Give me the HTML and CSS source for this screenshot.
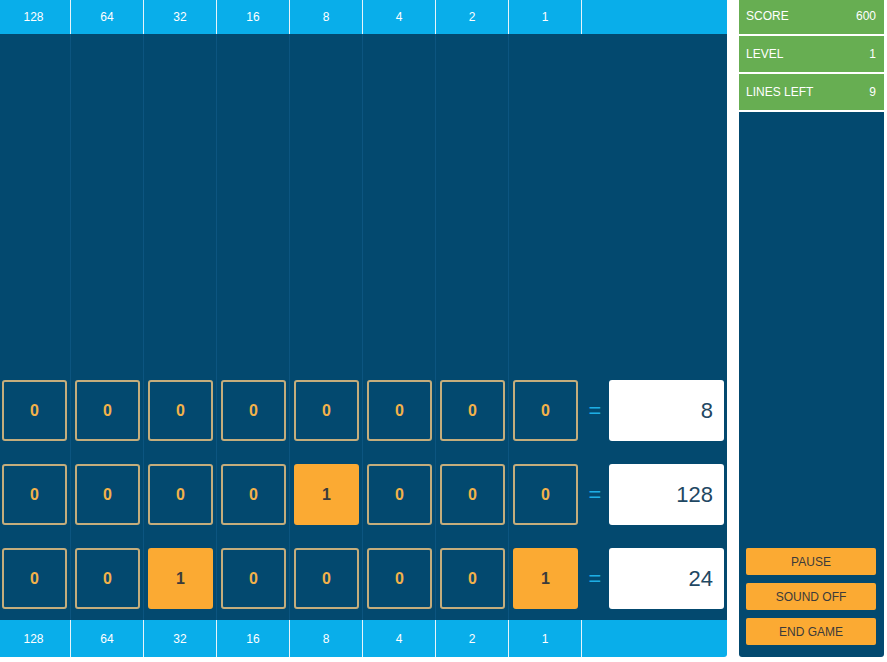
FILE: index.html
```html
<!DOCTYPE html>
<html lang="en">
<head>
<meta charset="UTF-8">
<meta name="viewport" content="width=device-width, initial-scale=1.0">
<title>Binary Game</title>
<link rel="stylesheet" href="styles.css">
</head>
<body>
    <div class="game">
        <div class="board">
            <div class="bits">
                <div class="bit">128</div><div class="bit">64</div><div class="bit">32</div><div class="bit">16</div>
                <div class="bit">8</div><div class="bit">4</div><div class="bit">2</div><div class="bit">1</div>
                <div class="bit"></div>
            </div>

            <div class="field">
                <div class="line">
                    <div class="cell">0</div><div class="cell">0</div><div class="cell">0</div><div class="cell">0</div>
                    <div class="cell">0</div><div class="cell">0</div><div class="cell">0</div><div class="cell">0</div>
                    <div class="answer"><span class="equals">=</span><div class="result">8</div></div>
                </div>
                <div class="line">
                    <div class="cell">0</div><div class="cell">0</div><div class="cell">0</div><div class="cell">0</div>
                    <div class="cell on">1</div><div class="cell">0</div><div class="cell">0</div><div class="cell">0</div>
                    <div class="answer"><span class="equals">=</span><div class="result">128</div></div>
                </div>
                <div class="line">
                    <div class="cell">0</div><div class="cell">0</div><div class="cell on">1</div><div class="cell">0</div>
                    <div class="cell">0</div><div class="cell">0</div><div class="cell">0</div><div class="cell on">1</div>
                    <div class="answer"><span class="equals">=</span><div class="result">24</div></div>
                </div>
            </div>

            <div class="bits bottom">
                <div class="bit">128</div><div class="bit">64</div><div class="bit">32</div><div class="bit">16</div>
                <div class="bit">8</div><div class="bit">4</div><div class="bit">2</div><div class="bit">1</div>
                <div class="bit"></div>
            </div>
        </div>

        <div class="sidebar">
            <div class="stat"><span>SCORE</span><span>600</span></div>
            <div class="stat"><span>LEVEL</span><span>1</span></div>
            <div class="stat"><span>LINES LEFT</span><span>9</span></div>
            <div class="controls">
                <button>PAUSE</button>
                <button>SOUND OFF</button>
                <button>END GAME</button>
            </div>
        </div>
    </div>
</body>
</html>
```

FILE: styles.css
```css
body {
    margin: 0;
    padding: 0;
    background-color: #fff;
    font-family: "Liberation Sans", Arial, sans-serif;
    overflow: hidden;
}
.game {
    display: flex;
    align-items: flex-start;
}
.board {
    width: 730px;
    margin-left: -3px;
    display: flex;
    flex-direction: column;
    border-bottom-right-radius: 3px;
    overflow: hidden;
}
.bits {
    display: grid;
    grid-template-columns: 74px repeat(7, 73px) 145px;
    height: 34px;
    background-color: #09aeea;
}
.bits.bottom {
    height: 37px;
}
.bit {
    color: #fff;
    font-size: 12px;
    display: flex;
    align-items: center;
    justify-content: center;
    border-right: 1px solid #e6f4fa;
}
.bit:last-child {
    border-right: none;
}
.field {
    height: 586px;
    box-sizing: border-box;
    padding-bottom: 11px;
    display: flex;
    flex-direction: column;
    justify-content: flex-end;
    gap: 23px;
    background-color: #03496f;
    background-image: repeating-linear-gradient(to right, #0c5580 0, #0c5580 1px, transparent 1px, transparent 73px);
    background-position: 73px 0;
    background-size: 511px 100%;
    background-repeat: no-repeat;
}
.line {
    display: grid;
    grid-template-columns: repeat(8, 73px) 146px;
    height: 61px;
}
.cell {
    width: 65px;
    margin-left: 5px;
    box-sizing: border-box;
    border: 2px solid #c4ad7c;
    border-radius: 3px;
    display: flex;
    align-items: center;
    justify-content: center;
    color: #f2b24a;
    font-weight: bold;
    font-size: 16px;
}
.cell.on {
    background-color: #fbaa33;
    border-color: #fbaa33;
    color: #3b3b3b;
}
.answer {
    display: flex;
    align-items: center;
}
.equals {
    width: 28px;
    text-align: center;
    color: #1eaee4;
    font-size: 22px;
}
.result {
    width: 115px;
    height: 61px;
    box-sizing: border-box;
    background-color: #fff;
    border-radius: 3px;
    padding-right: 11px;
    display: flex;
    align-items: center;
    justify-content: flex-end;
    color: #1f4863;
    font-size: 22px;
}
.sidebar {
    width: 145px;
    height: 659px;
    margin-top: -2px;
    margin-left: 12px;
    background-color: #03496f;
    border-bottom-left-radius: 3px;
    border-bottom-right-radius: 3px;
    display: flex;
    flex-direction: column;
}
.stat {
    height: 36px;
    border-bottom: 2px solid #fff;
    background-color: #67ae52;
    color: #fff;
    font-size: 12px;
    display: flex;
    align-items: center;
    justify-content: space-between;
    padding: 0 8px 0 7px;
}
.controls {
    margin-top: auto;
    padding: 0 8px 12px 7px;
    display: flex;
    flex-direction: column;
    gap: 8px;
}
button {
    height: 27px;
    border: none;
    border-radius: 2px;
    background-color: #fbaa33;
    color: #3b3b3b;
    font-family: "Liberation Sans", Arial, sans-serif;
    font-size: 12px;
    cursor: pointer;
}
```
